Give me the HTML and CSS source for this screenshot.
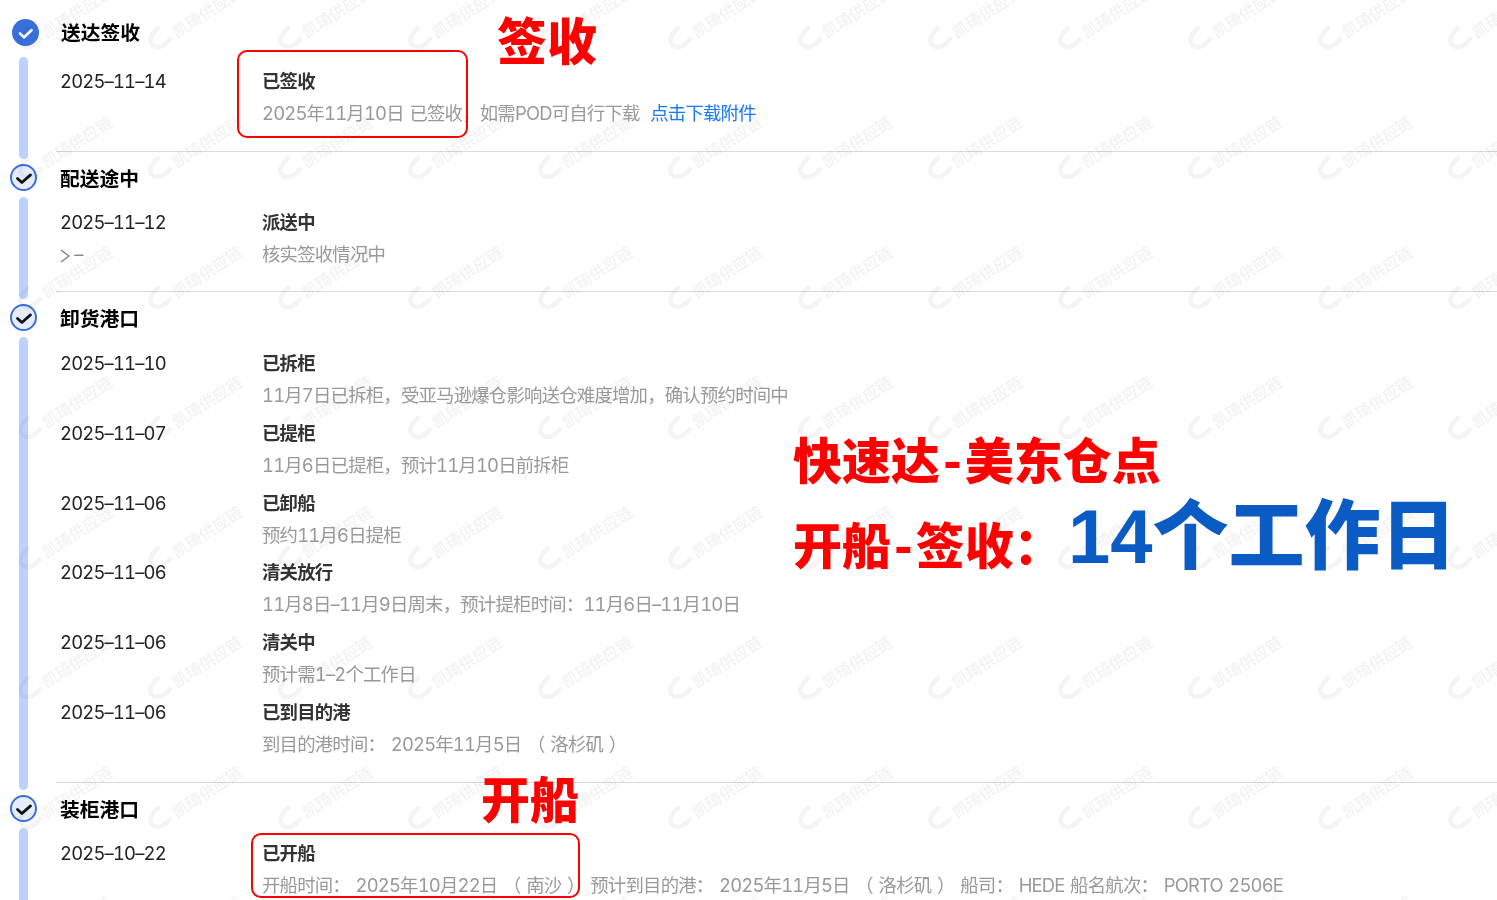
FILE: index.html
```html
<!DOCTYPE html>
<html lang="zh-CN">
<head>
    <meta charset="UTF-8">
    <meta name="viewport" content="width=device-width, initial-scale=1.0">
    <title>物流轨迹</title>
    <link rel="stylesheet" href="styles.css">
</head>
<body>
    <div class="page">
        <!-- 送达签收 -->
        <section class="step step-first">
            <div class="rail">
                <svg class="icon" viewBox="0 0 27 27"><circle cx="13.5" cy="13.5" r="13.5" fill="#3a6fdb"/><path d="M8 14.5l4 3.7 7.5-7" fill="none" stroke="#fff" stroke-width="2.6" stroke-linecap="round" stroke-linejoin="round"/></svg>
                <div class="bar"></div>
            </div>
            <div class="body">
                <h3 class="head">送达签收</h3>
                <div class="row">
                    <div class="date">2025–11–14</div>
                    <div class="info">
                        <div class="status">已签收</div>
                        <div class="desc">2025年11月10日 已签收，如需POD可自行下载 <a class="link">点击下载附件</a></div>
                    </div>
                </div>
            </div>
        </section>

        <!-- 配送途中 -->
        <section class="step">
            <div class="rail">
                <svg class="icon" viewBox="0 0 27 27"><circle cx="13.5" cy="13.5" r="12.5" fill="#e6ecfb" stroke="#3a6fdb" stroke-width="2"/><path d="M7.5 14.5l4.4 4 8.6-7.6" fill="none" stroke="#111" stroke-width="2.8" stroke-linecap="round" stroke-linejoin="round"/></svg>
                <div class="bar"></div>
            </div>
            <div class="body">
                <h3 class="head">配送途中</h3>
                <div class="row">
                    <div class="date">2025–11–12
                        <div class="place"><svg class="chevron" viewBox="0 0 10 14"><path d="M1 1l8 6-8 6" fill="none" stroke="#777" stroke-width="1.2"/></svg> –</div>
                    </div>
                    <div class="info">
                        <div class="status">派送中</div>
                        <div class="desc">核实签收情况中</div>
                    </div>
                </div>
            </div>
        </section>

        <!-- 卸货港口 -->
        <section class="step step-port">
            <div class="rail">
                <svg class="icon" viewBox="0 0 27 27"><circle cx="13.5" cy="13.5" r="12.5" fill="#e6ecfb" stroke="#3a6fdb" stroke-width="2"/><path d="M7.5 14.5l4.4 4 8.6-7.6" fill="none" stroke="#111" stroke-width="2.8" stroke-linecap="round" stroke-linejoin="round"/></svg>
                <div class="bar"></div>
            </div>
            <div class="body">
                <h3 class="head">卸货港口</h3>
                <div class="row">
                    <div class="date">2025–11–10</div>
                    <div class="info">
                        <div class="status">已拆柜</div>
                        <div class="desc">11月7日已拆柜，受亚马逊爆仓影响送仓难度增加，确认预约时间中</div>
                    </div>
                </div>
                <div class="row">
                    <div class="date">2025–11–07</div>
                    <div class="info">
                        <div class="status">已提柜</div>
                        <div class="desc">11月6日已提柜，预计11月10日前拆柜</div>
                    </div>
                </div>
                <div class="row">
                    <div class="date">2025–11–06</div>
                    <div class="info">
                        <div class="status">已卸船</div>
                        <div class="desc">预约11月6日提柜</div>
                    </div>
                </div>
                <div class="row">
                    <div class="date">2025–11–06</div>
                    <div class="info">
                        <div class="status">清关放行</div>
                        <div class="desc">11月8日–11月9日周末，预计提柜时间：11月6日–11月10日</div>
                    </div>
                </div>
                <div class="row">
                    <div class="date">2025–11–06</div>
                    <div class="info">
                        <div class="status">清关中</div>
                        <div class="desc">预计需1–2个工作日</div>
                    </div>
                </div>
                <div class="row">
                    <div class="date">2025–11–06</div>
                    <div class="info">
                        <div class="status">已到目的港</div>
                        <div class="desc">到目的港时间： 2025年11月5日 （ 洛杉矶 ）</div>
                    </div>
                </div>
            </div>
        </section>

        <!-- 装柜港口 -->
        <section class="step">
            <div class="rail">
                <svg class="icon" viewBox="0 0 27 27"><circle cx="13.5" cy="13.5" r="12.5" fill="#e6ecfb" stroke="#3a6fdb" stroke-width="2"/><path d="M7.5 14.5l4.4 4 8.6-7.6" fill="none" stroke="#111" stroke-width="2.8" stroke-linecap="round" stroke-linejoin="round"/></svg>
                <div class="bar"></div>
            </div>
            <div class="body">
                <h3 class="head">装柜港口</h3>
                <div class="row">
                    <div class="date">2025–10–22</div>
                    <div class="info">
                        <div class="status">已开船</div>
                        <div class="desc">开船时间： 2025年10月22日 （ 南沙 ） 预计到目的港： 2025年11月5日 （ 洛杉矶 ） 船司： HEDE 船名航次： PORTO 2506E</div>
                    </div>
                </div>
            </div>
        </section>

        <!-- 水印 -->
        <svg class="watermark">
            <defs>
                <pattern id="wm" x="42" y="100" width="130" height="130" patternUnits="userSpaceOnUse">
                    <g transform="translate(35 42) rotate(-33)">
                        <text class="wm-text" text-anchor="middle" y="6">凯琦供应链</text>
                    </g>
                    <path d="M116 58c-6 5-9 11-7 15 2 4 7 5 11 3 4-2 6-4 8-7" fill="none" stroke="#f4f4f4" stroke-width="4.5" stroke-linecap="round"/>
                </pattern>
            </defs>
            <rect width="100%" height="100%" fill="url(#wm)"/>
        </svg>

        <!-- 批注 -->
        <div class="mark mark-sign"></div>
        <div class="mark mark-ship"></div>
        <div class="note note-sign">签收</div>
        <div class="note note-ship">开船</div>
        <div class="note note-route">快速达<span class="dash">-</span>美东仓点</div>
        <div class="note note-total">开船<span class="dash">-</span>签收：</div>
        <div class="note note-days">14个工作日</div>
    </div>
</body>
</html>
```
FILE: styles.css
```css
* {
    box-sizing: border-box;
}

body {
    margin: 0;
    background: #fff;
    font-family: Inter, "Noto Sans CJK SC", sans-serif;
    font-variant-numeric: tabular-nums;
}

.page {
    position: relative;
    height: 900px;
    overflow: hidden;
}

.step {
    display: flex;
}

.rail {
    width: 56px;
    flex-shrink: 0;
    display: flex;
    flex-direction: column;
    padding: 12px 0 0 10px;
}

.icon {
    width: 27px;
    height: 27px;
    display: block;
    flex-shrink: 0;
}

.bar {
    flex: 1;
    width: 9px;
    margin: 6px 0 -7px 9px;
    background: #bdd2fb;
    border-radius: 5px;
}

.step-first .rail {
    padding: 19px 0 0 12px;
}

.step-first .bar {
    margin: 11px 0 -7px 7px;
}

.body {
    flex: 1;
    padding: 11px 0 21px;
    border-bottom: 1px solid #d9d9e3;
}

.step-first .body {
    padding-top: 17px;
    padding-bottom: 22px;
}

.step-first .head {
    margin-bottom: 16px;
    margin-left: 5px;
}

.step-port .body {
    padding-bottom: 22px;
}

.step-port .head {
    margin-bottom: 12px;
}

.head {
    margin: 0 0 11px 4px;
    height: 32px;
    line-height: 32px;
    font-size: 19.8px;
    font-weight: 700;
    color: #000;
}

.row {
    display: flex;
    height: 64px;
    line-height: 32px;
    font-size: 18.4px;
    letter-spacing: -0.8px;
    margin-bottom: 5.8px;
}

.row:last-child {
    margin-bottom: 0;
}

.date {
    width: 206px;
    padding-left: 4px;
    flex-shrink: 0;
    color: #222;
}

.place {
    color: #888;
}

.chevron {
    width: 10px;
    height: 14px;
    vertical-align: -2px;
}

.info {
    white-space: nowrap;
}

.status {
    font-weight: 700;
    color: #333;
}

.desc {
    color: #999;
    word-spacing: 1.5px;
}

.link {
    color: #1677ff;
    margin-left: 5px;
}

.watermark {
    position: absolute;
    inset: 0;
    width: 100%;
    height: 100%;
    pointer-events: none;
    mix-blend-mode: multiply;
    filter: blur(0.5px);
}

.wm-text {
    font-size: 16px;
    font-weight: 700;
    fill: #f4f4f4;
}

.mark {
    position: absolute;
    border: 2px solid #f00;
    border-radius: 10px;
}

.mark-sign {
    left: 237px;
    top: 50px;
    width: 231px;
    height: 88px;
}

.mark-ship {
    left: 251px;
    top: 833px;
    width: 329px;
    height: 65px;
}

.note {
    position: absolute;
    font-family: "Noto Sans CJK SC", sans-serif;
    font-weight: 900;
    color: #f00;
    white-space: nowrap;
    line-height: 1;
}

.dash {
    margin: 0 3px;
}

.note-sign {
    left: 497px;
    top: 13px;
    font-size: 50px;
}

.note-ship {
    left: 481px;
    top: 772px;
    font-size: 49px;
}

.note-route {
    left: 793px;
    top: 433px;
    font-size: 49px;
}

.note-total {
    left: 793px;
    top: 518px;
    font-size: 49px;
}

.note-days {
    left: 1068px;
    top: 499px;
    font-family: "Liberation Sans", "Noto Sans CJK SC", sans-serif;
    font-size: 76px;
    font-weight: 900;
    color: #0b5bc4;
}
```
